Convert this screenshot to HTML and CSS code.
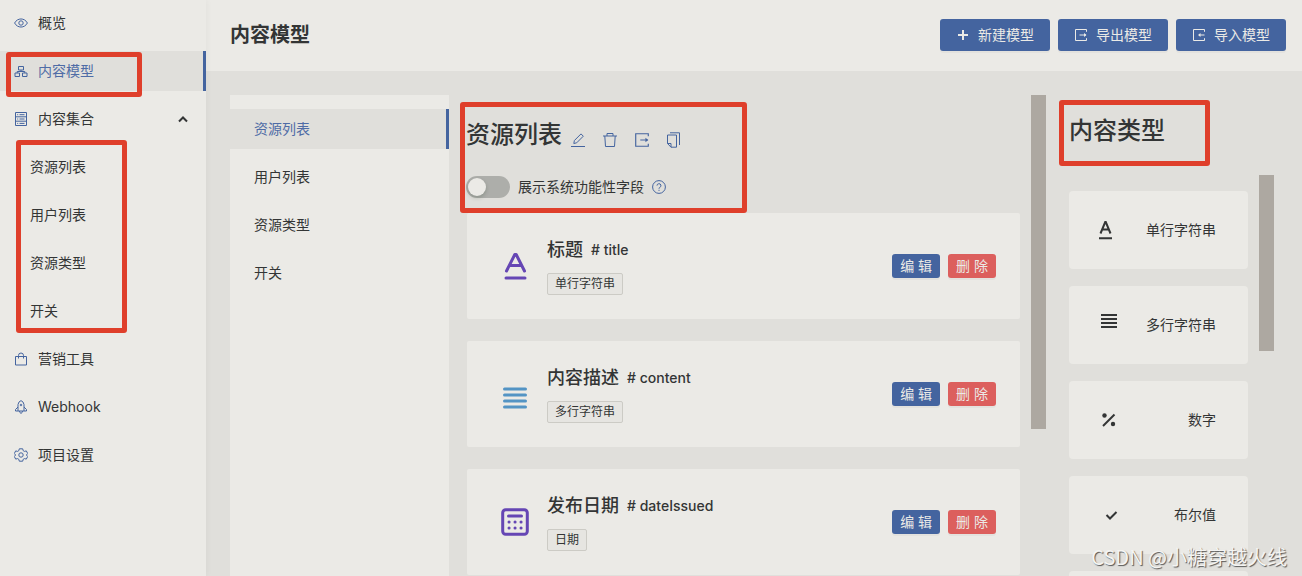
FILE: index.html
```html
<!DOCTYPE html>
<html lang="zh-CN">
<head>
    <meta charset="UTF-8">
    <meta name="viewport" content="width=device-width, initial-scale=1.0">
    <title>内容模型</title>
    <link rel="stylesheet" href="styles.css">
</head>
<body>
    <svg class="sprite" aria-hidden="true">
        <symbol id="export" viewBox="0 0 14 14">
            <path d="M12.500 3.800V1.500h-11v11h11v-2.300M5.500 7H12"/><path class="head" d="M10 5l2.500 2-2.500 2z"/>
        </symbol>
        <symbol id="import" viewBox="0 0 14 14">
            <path d="M12.500 3.800V1.500h-11v11h11v-2.300M7 7h5.500"/><path class="head" d="M8.500 5L6 7l2.500 2z"/>
        </symbol>
        <symbol id="text" viewBox="0 0 32 32">
            <path d="M7.500 21L15.800 4.500h1.400l8.300 16.500M10.500 15.500h12M7 28h19"/>
        </symbol>
    </svg>

    <div class="layout">
        <aside class="sidebar">
            <nav>
                <ul class="menu">
                    <li><a href="#" class="menu-item">
                        <svg class="icon" viewBox="0 0 14 14"><path d="M.6 7C3.500 1.600 10.500 1.600 13.400 7 10.500 12.400 3.500 12.400.6 7z"/><circle cx="7" cy="7" r="2.200"/></svg>
                        概览</a></li>
                    <li class="marked"><a href="#" class="menu-item active">
                        <svg class="icon" viewBox="0 0 14 14"><path d="M4.500 2.500h5v3.500h-5zM1 9h4.500v3.500H1zM8.500 9H13v3.500H8.500zM7 6v1.500M3.200 9V7.500h7.600V9"/></svg>
                        内容模型</a><span class="mark mark-model"></span></li>
                    <li><a href="#" class="menu-item">
                        <svg class="icon" viewBox="0 0 14 14"><path d="M1.500.5h11v13h-11zM1.500 4.800h11M1.500 9.200h11M5.500 2.700h5M5.500 7h5M5.500 11.400h5M3.200 2.700h1M3.200 7h1M3.200 11.400h1"/></svg>
                        内容集合
                        <svg class="icon arrow" viewBox="0 0 10 10"><path d="M1 7.500l4-4 4 4"/></svg></a></li>
                    <li class="marked">
                        <ul class="menu submenu">
                            <li><a href="#" class="menu-item">资源列表</a></li>
                            <li><a href="#" class="menu-item">用户列表</a></li>
                            <li><a href="#" class="menu-item">资源类型</a></li>
                            <li><a href="#" class="menu-item">开关</a></li>
                        </ul>
                        <span class="mark mark-submenu"></span>
                    </li>
                    <li><a href="#" class="menu-item">
                        <svg class="icon" viewBox="0 0 14 14"><path d="M1.500 4.500h11v8.500h-11zM4.500 6.500V3.500a2.500 2.500 0 0 1 5 0v3"/></svg>
                        营销工具</a></li>
                    <li><a href="#" class="menu-item">
                        <svg class="icon" viewBox="0 0 14 14"><path d="M4 11V4.500Q4.500 1.500 7 .6 9.500 1.500 10 4.500V11zM4 7L1.500 9.500V11H4M10 7l2.500 2.500V11H10M5.500 11q0 1.800 1.500 2.400Q8.500 12.800 8.500 11"/><circle cx="7" cy="5" r=".8"/></svg>
                        Webhook</a></li>
                    <li><a href="#" class="menu-item">
                        <svg class="icon" viewBox="0 0 14 14"><path d="M5.300.8h3.400l.5 1.900 1.200.7 1.900-.5 1.400 2.600L12.400 7l1.300 1.500-1.400 2.600-1.900-.5-1.200.7-.5 1.900H5.300l-.5-1.900-1.200-.7-1.900.5L.3 8.500 1.600 7 .3 5.500l1.400-2.600 1.900.5 1.200-.7z"/><circle cx="7" cy="7" r="2.200"/></svg>
                        项目设置</a></li>
                </ul>
            </nav>
        </aside>

        <main class="main">
            <header class="header">
                <h1>内容模型</h1>
                <div class="header-buttons">
                    <button class="btn"><svg class="icon plus" viewBox="0 0 14 14"><path d="M7 2v10M2 7h10"/></svg>新建模型</button>
                    <button class="btn"><svg class="icon"><use href="#export"/></svg>导出模型</button>
                    <button class="btn"><svg class="icon"><use href="#import"/></svg>导入模型</button>
                </div>
            </header>

            <div class="content">
                <ul class="menu models">
                    <li><a href="#" class="menu-item active">资源列表</a></li>
                    <li><a href="#" class="menu-item">用户列表</a></li>
                    <li><a href="#" class="menu-item">资源类型</a></li>
                    <li><a href="#" class="menu-item">开关</a></li>
                </ul>

                <section class="fields">
                    <div class="fields-head">
                        <h2>资源列表</h2>
                        <div class="actions">
                            <button aria-label="编辑"><svg class="icon" viewBox="0 0 16 16"><path d="M1 14.500h14M3.800 11.500l.6-3L11 1.900l2.300 2.300-6.600 6.600z"/></svg></button>
                            <button aria-label="删除"><svg class="icon" viewBox="0 0 16 16"><path d="M1 4h14M5 4V1.500h6V4M2.800 4l.7 10.500h9L13.200 4"/></svg></button>
                            <button aria-label="导出"><svg class="icon"><use href="#export"/></svg></button>
                            <button aria-label="复制"><svg class="icon" viewBox="0 0 16 16"><path d="M4 .8h9.500V13M1.500 3h9v12.200H5L1.500 11.500zM1.500 11.500H5v3.700"/></svg></button>
                        </div>
                        <span class="mark mark-fields"></span>
                    </div>
                    <div class="switch-row">
                        <input type="checkbox" class="switch" id="system">
                        <label for="system">展示系统功能性字段</label>
                        <svg class="icon" viewBox="0 0 14 14"><circle cx="7" cy="7" r="6.400"/><path d="M5 5.600a2 1.900 0 1 1 2.900 1.700Q7 7.700 7 8.700M7 9.800v1.100"/></svg>
                    </div>

                    <article class="card">
                        <svg class="type-icon purple"><use href="#text"/></svg>
                        <div class="info">
                            <h3>标题 <small># title</small></h3>
                            <span class="tag">单行字符串</span>
                        </div>
                        <button class="btn small">编 辑</button>
                        <button class="btn small danger">删 除</button>
                    </article>
                    <article class="card">
                        <svg class="type-icon blue" viewBox="0 0 32 32"><path d="M5.500 11h21M5.500 17h21M5.500 23h21M5.500 29h21"/></svg>
                        <div class="info">
                            <h3>内容描述 <small># content</small></h3>
                            <span class="tag">多行字符串</span>
                        </div>
                        <button class="btn small">编 辑</button>
                        <button class="btn small danger">删 除</button>
                    </article>
                    <article class="card">
                        <svg class="type-icon purple" viewBox="0 0 32 32"><rect x="3.700" y="3.700" width="24.600" height="24.600" rx="3"/><path d="M9.500 10h13M10 16h.1M16 16h.1M22 16h.1M10 22h.1M16 22h.1M22 22h.1"/></svg>
                        <div class="info">
                            <h3>发布日期 <small># dateIssued</small></h3>
                            <span class="tag">日期</span>
                        </div>
                        <button class="btn small">编 辑</button>
                        <button class="btn small danger">删 除</button>
                    </article>
                </section>
                <div class="scrollbar"><div class="thumb fields-thumb"></div></div>

                <section class="types">
                    <h2>内容类型</h2>
                    <span class="mark mark-types"></span>
                    <div class="types-body">
                        <ul class="type-list">
                            <li><svg viewBox="0 0 24 24"><path d="M1.500 15.500L6.200 4h.6l4.700 11.500M3.400 11.500h6.200M0 20.200h13"/></svg>单行字符串</li>
                            <li><svg viewBox="0 0 24 24"><path d="M2 2h16M2 6h16M2 10h16M2 14h16"/></svg>多行字符串</li>
                            <li><svg viewBox="0 0 24 24"><path d="M4 18L15.500 6.500"/><circle class="dot" cx="5.500" cy="7.500" r="2.200"/><circle class="dot" cx="14" cy="16" r="2.200"/></svg>数字</li>
                            <li><svg viewBox="0 0 24 24"><path d="M7.500 12l3.500 3.500L17.500 9"/></svg>布尔值</li>
                            <li></li>
                        </ul>
                        <div class="scrollbar"><div class="thumb types-thumb"></div></div>
                    </div>
                </section>
            </div>
        </main>
    </div>
    <div class="watermark">CSDN @小糖穿越火线</div>
</body>
</html>
```
FILE: styles.css
```css
* {
    box-sizing: border-box;
}
body {
    margin: 0;
    background-color: #e0dfdb;
    color: #333535;
    font-family: Inter, "Noto Sans CJK SC", sans-serif;
    font-size: 14px;
    line-height: 22px;
}
h1, h2, h3, ul {
    margin: 0;
    padding: 0;
    font-weight: 500;
}
ul {
    list-style: none;
    font-weight: 400;
}
button {
    font: inherit;
    border: none;
    cursor: pointer;
}
.sprite {
    display: none;
}
.layout {
    display: flex;
    height: 100vh;
    overflow: hidden;
    position: relative;
}
.icon {
    width: 14px;
    height: 14px;
    flex: none;
    fill: none;
    stroke: currentColor;
    stroke-width: 1;
}
.head {
    fill: currentColor;
    stroke: none;
}

/* side menu */
.sidebar {
    flex: none;
    width: 206px;
    padding-top: 3px;
    background-color: #ebeae6;
    box-shadow: 1px 0 6px rgba(0, 0, 0, 0.04);
    position: relative;
}
.menu {
    display: flex;
    flex-direction: column;
    gap: 8px;
}
.menu-item {
    display: flex;
    align-items: center;
    gap: 10px;
    height: 40px;
    padding: 0 18px 0 14px;
    color: #333535;
    text-decoration: none;
}
.menu-item .icon {
    color: #44649f;
}
.menu-item .arrow {
    width: 10px;
    height: 10px;
    margin-left: auto;
    color: #333535;
    stroke-width: 2;
}
.menu-item.active {
    color: #4f6ca6;
    background-color: #e0dfdb;
    border-right: 3px solid #44649f;
}
.submenu .menu-item {
    padding-left: 30px;
}

/* header */
.main {
    flex: 1;
    min-width: 0;
    display: flex;
    flex-direction: column;
}
.header {
    flex: none;
    display: flex;
    align-items: center;
    justify-content: space-between;
    height: 71px;
    padding: 0 16px 1px 24px;
    background-color: #ebeae6;
}
h1 {
    font-size: 20px;
    font-weight: 700;
    line-height: 28px;
}
.header-buttons {
    display: flex;
    gap: 8px;
}
.btn {
    display: flex;
    align-items: center;
    gap: 8px;
    height: 32px;
    padding: 0 16px;
    border-radius: 3px;
    background-color: #44649f;
    color: #ebeae6;
    box-shadow: 0 2px 0 rgba(0, 0, 0, 0.03);
    white-space: nowrap;
}
.plus {
    stroke-width: 2;
}
.btn.small {
    height: 24px;
    padding: 0 8px;
}
.btn.danger {
    background-color: #dc5f5d;
}

/* content */
.content {
    flex: 1;
    min-height: 0;
    display: flex;
    padding: 24px 28px 0 24px;
}
.models {
    flex: none;
    width: 219px;
    padding-top: 14px;
    background-color: #ebeae6;
}
.models .menu-item {
    padding-left: 24px;
}
.fields {
    flex: 1;
    min-width: 0;
    padding: 24px 11px 0 17px;
}
h2 {
    font-size: 24px;
    line-height: 32px;
}
.fields-head {
    display: flex;
    align-items: flex-end;
    gap: 8px;
    position: relative;
}
.actions {
    display: flex;
    gap: 16px;
    margin-bottom: 3px;
}
.actions button {
    display: flex;
    padding: 0;
    background: none;
    color: #44649f;
}
.actions .icon {
    width: 16px;
    height: 16px;
}
.switch-row {
    display: flex;
    align-items: center;
    gap: 8px;
    margin: 25px 0 15px;
}
.switch-row .icon {
    color: #44649f;
}
.switch {
    appearance: none;
    width: 44px;
    height: 22px;
    margin: 0;
    padding: 2px;
    border-radius: 11px;
    background-color: #adaeaa;
    cursor: pointer;
}
.switch::before {
    content: "";
    display: block;
    width: 18px;
    height: 18px;
    border-radius: 50%;
    background-color: #ebeae6;
    box-shadow: 0 2px 4px rgba(0, 35, 11, 0.2);
}
.switch:checked {
    background-color: #44649f;
}
.switch:checked::before {
    margin-left: auto;
}
.card {
    display: flex;
    align-items: center;
    gap: 8px;
    height: 106px;
    margin: 0 0 22px 1px;
    padding: 24px 24px 24px 32px;
    border-radius: 2px;
    background-color: #ebeae6;
}
.type-icon {
    flex: none;
    width: 32px;
    height: 32px;
    fill: none;
    stroke: currentColor;
    stroke-width: 3;
    stroke-linecap: round;
    stroke-linejoin: round;
}
.purple {
    color: #6546b4;
}
.blue {
    color: #5394c4;
}
.info {
    flex: 1;
    padding-left: 8px;
}
h3 {
    display: flex;
    align-items: center;
    gap: 8px;
    margin-bottom: 10px;
    font-size: 18px;
    line-height: 26px;
}
h3 small {
    font-size: 14px;
}
.tag {
    display: block;
    width: fit-content;
    padding: 0 7px;
    border: 1px solid #cccbc5;
    border-radius: 2px;
    background-color: #e6e5e1;
    font-size: 12px;
    line-height: 20px;
}
.scrollbar {
    flex: none;
    width: 15px;
}
.thumb {
    background-color: #ada8a1;
}
.fields-thumb {
    height: 69.5%;
}
.types-thumb {
    height: 44%;
}

/* content types */
.types {
    flex: none;
    display: flex;
    flex-direction: column;
    margin-left: 23px;
    padding-top: 20px;
    position: relative;
}
.types-body {
    flex: 1;
    min-height: 0;
    display: flex;
    gap: 11px;
    margin-top: 28px;
}
.type-list {
    display: flex;
    flex-direction: column;
    gap: 17px;
    width: 179px;
    padding-top: 16px;
}
.type-list li {
    flex: none;
    display: flex;
    align-items: center;
    justify-content: space-between;
    height: 78px;
    padding: 0 32px 0 30px;
    border-radius: 4px;
    background-color: #ebeae6;
}
.type-list svg {
    width: 24px;
    height: 24px;
    fill: none;
    stroke: currentColor;
    stroke-width: 2;
}
.type-list .dot {
    fill: currentColor;
    stroke: none;
}

/* red marks over the page */
.marked {
    position: relative;
}
.mark {
    position: absolute;
    border: 5px solid #df3f2b;
    border-radius: 3px;
    pointer-events: none;
}
.mark-model {
    top: 1px;
    left: 6px;
    width: 136px;
    height: 45px;
}
.mark-submenu {
    top: -7px;
    left: 16px;
    width: 111px;
    height: 193px;
}
.mark-fields {
    top: -17px;
    left: -6px;
    width: 287px;
    height: 111px;
}
.mark-types {
    top: 5px;
    left: -10px;
    width: 151px;
    height: 66px;
}
.watermark {
    position: absolute;
    right: 15px;
    bottom: 5px;
    color: #f4f4f2;
    font-family: "Noto Sans CJK SC", sans-serif;
    font-size: 20px;
    font-weight: 400;
    line-height: 28px;
    text-shadow: 1px 1px 1px #555;
}
```
